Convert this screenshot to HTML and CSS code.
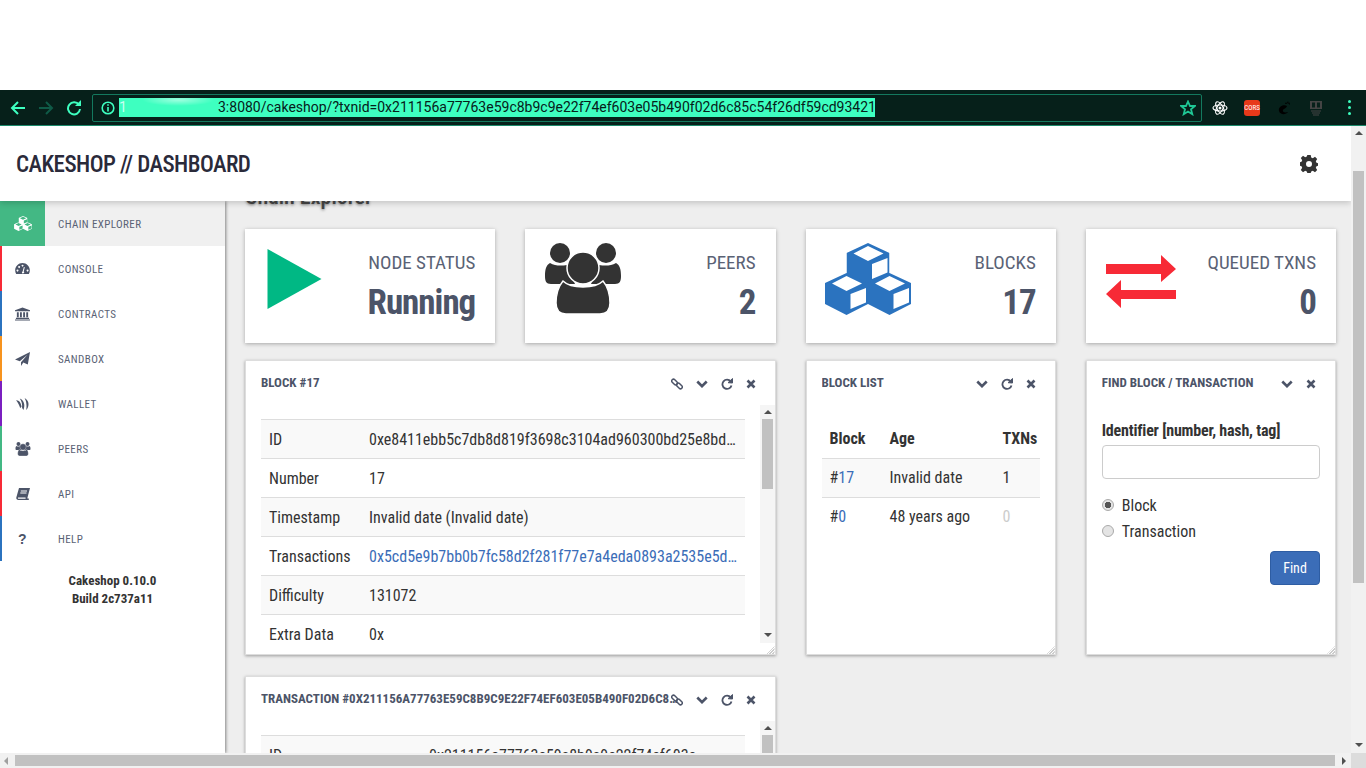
FILE: index.html
```html
<!DOCTYPE html>
<html lang="en">

<head>
    <meta charset="UTF-8">
    <title>Cakeshop Dashboard</title>
    <link rel="stylesheet" href="styles.css">
</head>

<body>
    <svg class="sprite" width="0" height="0">
        <symbol id="i-cube" viewBox="0 0 43 42">
            <path fill-rule="evenodd" d="M21.5 0L43 10V31L21.5 42L0 31V10ZM21.5 3L7 10.5L21.5 18L37 10.5ZM25.5 21V36L41 29.5V15Z" />
        </symbol>
        <symbol id="i-cubes" viewBox="0 0 86 72">
            <use href="#i-cube" x="21.5" y="0" width="43" height="42" />
            <use href="#i-cube" x="0" y="30" width="43" height="42" />
            <use href="#i-cube" x="43" y="30" width="43" height="42" />
        </symbol>
        <symbol id="i-users" viewBox="0 0 76 71">
            <circle cx="15" cy="10" r="10" />
            <circle cx="61" cy="10" r="10" />
            <path d="M5 20C10 23 16 23 22 22L30 41H6C1 41 0 38 0 33C0 27 1 22 5 20Z" />
            <path d="M71 20C66 23 60 23 54 22L46 41H70C75 41 76 38 76 33C76 27 75 22 71 20Z" />
            <path d="M18 38C26 46 50 46 58 38C63 44 65 52 65 60C65 67 61 71 55 71H21C15 71 11 67 11 60C11 52 13 44 18 38Z" stroke="#fff" stroke-width="1.5" />
            <circle cx="38" cy="25" r="16" stroke="#fff" stroke-width="1.5" />
        </symbol>
        <symbol id="i-gauge" viewBox="0 0 16 12">
            <path fill-rule="evenodd" d="M8 0C12.5 0 16 3.6 16 8C16 9.5 15.6 10.9 14.9 12H1.1C0.4 10.9 0 9.500 0 8C0 3.600 3.500 0 8 0ZM7.300 10.300A1.200 1.200 0 1 0 9.300 9.300L10.500 4.500L9.500 4.300L8.200 9ZM2.500 7.200A1 1 0 1 0 2.600 7.200ZM4.300 3.400A1 1 0 1 0 4.400 3.400ZM8 1.800A1 1 0 1 0 8.100 1.800ZM13.500 7.200A1 1 0 1 0 13.600 7.200Z" />
        </symbol>
        <symbol id="i-bank" viewBox="0 0 16 14">
            <path d="M8 0L16 3V4H0V3ZM2 5H4V10.500H2ZM5.300 5H7.300V10.500H5.300ZM8.700 5H10.700V10.500H8.700ZM12 5H14V10.500H12ZM1 11H15V12.300H1ZM0 12.800H16V14H0Z" />
        </symbol>
        <symbol id="i-plane" viewBox="0 0 15 14">
            <path d="M15 0L12.800 12.500L8.300 10.500L6 14V10.200L12.500 2.800L4.800 9.300L0 7.500Z" />
        </symbol>
        <symbol id="i-wallet" viewBox="0 0 14 13">
            <path d="M0 2.500C2.500 2.500 4 3.700 5 6L6 9.200C5.200 10 4.800 10.500 4.500 11C3.700 8 2 5 0 2.500Z" />
            <path d="M4 .5C6.500 1 8.200 3.500 8.800 6.500C9.200 8.500 8.800 11 8 13C7.200 12 6.800 11 6.500 10.300C7 7 6 3 4 .5Z" />
            <path d="M9.300 0C12 1.500 13.500 4 13.500 6.500C13.500 9 12.800 11.300 11 13C11.300 11 11.500 9 11.200 6.500C11 4 10.300 2 9.300 0Z" />
        </symbol>
        <symbol id="i-book" viewBox="0 0 14 12">
            <path fill-rule="evenodd" d="M3 0H14L11.500 9.500C11.300 10.200 11.300 10.500 12 10.500H12.800V12H2.500C1 12 0 11 0.300 9.500ZM4.800 2.500V3.500H11V2.500ZM4.300 4.500V5.500H10.500V4.500ZM2.500 9.500C2 9.500 1.800 10 2 10.400C2.100 10.700 2.400 10.800 2.800 10.800H9.700C9.500 10.300 9.500 10 9.600 9.500Z" />
        </symbol>
        <symbol id="i-link" viewBox="0 0 12 12">
            <g fill="none" stroke-width="1.500">
                <rect x="0.300" y="2.200" width="6.500" height="3.600" rx="1.800" transform="rotate(45 3.500 4)" />
                <rect x="5.200" y="6.200" width="6.500" height="3.600" rx="1.800" transform="rotate(45 8.500 8)" />
            </g>
        </symbol>
        <symbol id="i-chevron" viewBox="0 0 12 8">
            <path d="M1.300 1.500L6 6.200L10.700 1.500" fill="none" stroke-width="2.600" />
        </symbol>
        <symbol id="i-refresh" viewBox="0 0 12 12">
            <path d="M9.700 3.500A4.600 4.600 0 1 0 10.500 7.500" fill="none" stroke-width="1.800" />
            <path d="M7 4.700L11.500 5V0.500Z" />
        </symbol>
        <symbol id="i-times" viewBox="0 0 10 10">
            <path d="M1.500 1.500L8.500 8.500M8.500 1.500L1.500 8.500" fill="none" stroke-width="2.600" />
        </symbol>
    </svg>

    <div class="desktop-top"></div>

    <div class="browser-bar">
        <svg class="nav-icon" viewBox="0 0 16 16"><path d="M15 8H2M8 2L2 8L8 14" /></svg>
        <svg class="nav-icon nav-off" viewBox="0 0 16 16"><path d="M1 8H14M8 2L14 8L8 14" /></svg>
        <svg class="nav-icon" viewBox="0 0 16 16"><path d="M13 5A6 6 0 1 0 14 9" /><path class="solid" d="M9 6H15V0Z" /></svg>
        <div class="address">
            <svg class="info-icon" viewBox="0 0 14 14"><circle cx="7" cy="7" r="5.800" /><path d="M7 6V10.500M7 3.200V4.800" /></svg>
            <span class="selection"><span class="masked">1</span>3:8080/cakeshop/?txnid=0x211156a77763e59c8b9c9e22f74ef603e05b490f02d6c85c54f26df59cd93421</span>
            <svg class="star-icon" viewBox="0 0 16 16"><path d="M8 1.500L10 6H14.800L11 9.200L12.300 14.200L8 11.500L3.700 14.200L5 9.200L1.200 6H6Z" /></svg>
        </div>
        <div class="extensions">
            <svg class="ext" viewBox="0 0 16 16"><g fill="none" stroke="#fff" stroke-width="1.200"><ellipse cx="8" cy="8" rx="7" ry="3" /><ellipse cx="8" cy="8" rx="7" ry="3" transform="rotate(60 8 8)" /><ellipse cx="8" cy="8" rx="7" ry="3" transform="rotate(120 8 8)" /></g><circle cx="8" cy="8" r="1.500" fill="#fff" /></svg>
            <span class="ext cors">CORS</span>
            <svg class="ext" viewBox="0 0 16 16"><path d="M11 6C7 4 2 7 3 11C4 15 10 15 12 12C9 13 6 12 7 10C8 8 10 9 11 6ZM10 2L11 4L9 4ZM12 1L13 4L11 3ZM14 2L14 5L13 4Z" fill="#000" /></svg>
            <svg class="ext" viewBox="0 0 16 16"><rect x="2" y="1" width="12" height="8" fill="#444" /><rect x="4" y="2.500" width="3" height="5" fill="#06201a" /><rect x="9" y="2.500" width="3" height="5" fill="#06201a" /><path d="M3 11H13M4 13H12M5 15H11" stroke="#444" /></svg>
            <span class="menu-dots"><i></i><i></i><i></i></span>
        </div>
    </div>

    <div class="window">
        <div class="page-row">
            <div class="page">
                <header class="top-header">
                    <h1>CAKESHOP // DASHBOARD</h1>
                    <svg class="cog" viewBox="0 0 18 18"><path fill-rule="evenodd" d="M7.300 0H10.700L11.200 2.500L12.800 3.200L15 1.800L17.200 4L15.800 6.200L16.500 7.800L18 8.200V10.800L16.500 11.200L15.800 12.800L17.200 15L15 17.200L12.800 15.800L11.200 16.500L10.700 18H7.300L6.800 16.500L5.200 15.800L3 17.200L0.800 15L2.200 12.800L1.500 11.200L0 10.800V7.300L1.500 6.800L2.200 5.200L0.800 3L3 0.800L5.200 2.200L6.800 1.500ZM9 6A3 3 0 1 0 9 12A3 3 0 1 0 9 6Z" /></svg>
                </header>

                <div class="body-row">
                    <nav class="sidebar">
                        <a class="nav-item active"><span class="nav-glyph"><svg width="18" height="15"><use href="#i-cubes" /></svg></span><span class="nav-label">CHAIN EXPLORER</span></a>
                        <a class="nav-item c-red"><span class="nav-glyph"><svg width="15" height="11"><use href="#i-gauge" /></svg></span><span class="nav-label">CONSOLE</span></a>
                        <a class="nav-item c-blue"><span class="nav-glyph"><svg width="15" height="14"><use href="#i-bank" /></svg></span><span class="nav-label">CONTRACTS</span></a>
                        <a class="nav-item c-orange"><span class="nav-glyph"><svg width="15" height="14"><use href="#i-plane" /></svg></span><span class="nav-label">SANDBOX</span></a>
                        <a class="nav-item c-purple"><span class="nav-glyph"><svg width="13" height="12"><use href="#i-wallet" /></svg></span><span class="nav-label">WALLET</span></a>
                        <a class="nav-item c-green"><span class="nav-glyph"><svg width="16" height="14"><use href="#i-users" /></svg></span><span class="nav-label">PEERS</span></a>
                        <a class="nav-item c-red"><span class="nav-glyph"><svg width="14" height="12"><use href="#i-book" /></svg></span><span class="nav-label">API</span></a>
                        <a class="nav-item c-blue"><span class="nav-glyph question">?</span><span class="nav-label">HELP</span></a>
                        <div class="version">Cakeshop 0.10.0<br>Build 2c737a11</div>
                    </nav>

                    <main class="content">
                        <h2 class="page-title">Chain Explorer</h2>
                        <div class="grid">
                            <section class="stat">
                                <svg class="stat-play" viewBox="0 0 56 62"><path d="M1 1L55 31L1 61Z" /></svg>
                                <div class="stat-text"><div class="stat-label">NODE STATUS</div><div class="stat-value">Running</div></div>
                            </section>
                            <section class="stat">
                                <svg class="stat-users" viewBox="0 0 76 71"><use href="#i-users" /></svg>
                                <div class="stat-text"><div class="stat-label">PEERS</div><div class="stat-value">2</div></div>
                            </section>
                            <section class="stat">
                                <svg class="stat-cubes" viewBox="0 0 86 72"><use href="#i-cubes" /></svg>
                                <div class="stat-text"><div class="stat-label">BLOCKS</div><div class="stat-value">17</div></div>
                            </section>
                            <section class="stat">
                                <svg class="stat-exchange" viewBox="0 0 70 53"><path d="M0 9H55V0L70 14L55 27V19H0ZM70 35H15V25L0 39L15 53V44H70Z" /></svg>
                                <div class="stat-text"><div class="stat-label">QUEUED TXNS</div><div class="stat-value">0</div></div>
                            </section>

                            <section class="widget wide">
                                <div class="widget-head">
                                    <span class="widget-title">BLOCK #17</span>
                                    <span class="widget-tools">
                                        <svg width="12" height="12"><use href="#i-link" /></svg>
                                        <svg width="12" height="8"><use href="#i-chevron" /></svg>
                                        <svg width="12" height="12"><use href="#i-refresh" /></svg>
                                        <svg width="10" height="10"><use href="#i-times" /></svg>
                                    </span>
                                </div>
                                <div class="widget-scroll">
                                    <table class="detail-table">
                                        <tr><td>ID</td><td><div class="clip">0xe8411ebb5c7db8d819f3698c3104ad960300bd25e8bd4cc3a1e2f0b7c96d21aa</div></td></tr>
                                        <tr><td>Number</td><td>17</td></tr>
                                        <tr><td>Timestamp</td><td>Invalid date (Invalid date)</td></tr>
                                        <tr><td>Transactions</td><td><div class="clip link">0x5cd5e9b7bb0b7fc58d2f281f77e7a4eda0893a2535e5d8c1f2e04b7a6d3390ce</div></td></tr>
                                        <tr><td>Difficulty</td><td>131072</td></tr>
                                        <tr><td>Extra Data</td><td>0x</td></tr>
                                    </table>
                                    <div class="inner-bar"><b class="arrow-up"></b><i class="inner-thumb"></i><b class="arrow-down"></b></div>
                                </div>
                            </section>

                            <section class="widget">
                                <div class="widget-head">
                                    <span class="widget-title">BLOCK LIST</span>
                                    <span class="widget-tools">
                                        <svg width="12" height="8"><use href="#i-chevron" /></svg>
                                        <svg width="12" height="12"><use href="#i-refresh" /></svg>
                                        <svg width="10" height="10"><use href="#i-times" /></svg>
                                    </span>
                                </div>
                                <table class="list-table">
                                    <tr><th class="col-block">Block</th><th class="col-age">Age</th><th>TXNs</th></tr>
                                    <tr><td>#<a class="link">17</a></td><td>Invalid date</td><td>1</td></tr>
                                    <tr><td>#<a class="link">0</a></td><td>48 years ago</td><td class="muted">0</td></tr>
                                </table>
                            </section>

                            <section class="widget">
                                <div class="widget-head">
                                    <span class="widget-title">FIND BLOCK / TRANSACTION</span>
                                    <span class="widget-tools">
                                        <svg width="12" height="8"><use href="#i-chevron" /></svg>
                                        <svg width="10" height="10"><use href="#i-times" /></svg>
                                    </span>
                                </div>
                                <form class="find-form">
                                    <label class="find-label" for="identifier">Identifier [number, hash, tag]</label>
                                    <input class="find-input" type="text" id="identifier">
                                    <label class="radio"><input type="radio" name="kind" checked>Block</label>
                                    <label class="radio"><input type="radio" name="kind">Transaction</label>
                                    <button type="button" class="find-btn">Find</button>
                                </form>
                            </section>

                            <section class="widget wide">
                                <div class="widget-head">
                                    <span class="widget-title">TRANSACTION #0X211156A77763E59C8B9C9E22F74EF603E05B490F02D6C85C54F26DF59CD93421</span>
                                    <span class="widget-tools">
                                        <svg width="12" height="12"><use href="#i-link" /></svg>
                                        <svg width="12" height="8"><use href="#i-chevron" /></svg>
                                        <svg width="12" height="12"><use href="#i-refresh" /></svg>
                                        <svg width="10" height="10"><use href="#i-times" /></svg>
                                    </span>
                                </div>
                                <div class="widget-scroll">
                                    <table class="detail-table tx-table">
                                        <tr><td>ID</td><td><div class="clip">0x211156a77763e59c8b9c9e22f74ef603e05b490f02d6c85c54f26df59cd93421</div></td></tr>
                                    </table>
                                    <div class="inner-bar"><b class="arrow-up"></b><i class="inner-thumb"></i></div>
                                </div>
                            </section>
                        </div>
                    </main>
                </div>
            </div>

            <div class="page-vbar"><b class="arrow-up"></b><i class="page-vthumb"></i><b class="arrow-down"></b></div>
        </div>

        <div class="page-hbar">
            <b class="arrow-left"></b>
            <i class="page-hthumb"></i>
            <b class="arrow-right"></b>
            <span class="corner"></span>
        </div>
        <span class="dock-tab"></span>
    </div>
</body>

</html>
```

FILE: styles.css
```css
* {
    box-sizing: border-box;
}

html,
body {
    margin: 0;
    padding: 0;
    height: 768px;
    overflow: hidden;
    background-color: #fff;
    font-family: "Roboto Condensed", "Liberation Sans Narrow", Roboto, sans-serif;
    font-stretch: condensed;
    color: #333;
}

.sprite {
    position: absolute;
}

.desktop-top {
    height: 90px;
    background-color: #fff;
}

/* browser chrome */
.browser-bar {
    display: flex;
    align-items: center;
    height: 36px;
    padding-left: 10px;
    background-color: #06201a;
    border-bottom: 1px solid #1b8a6b;
}

.nav-icon {
    width: 16px;
    height: 16px;
    margin-right: 12px;
    fill: none;
    stroke: #3effc0;
    stroke-width: 2;
}

.nav-icon .solid {
    fill: #3effc0;
    stroke: none;
}

.nav-off {
    stroke: #0f5a47;
}

.address {
    display: flex;
    align-items: center;
    width: 1110px;
    height: 28px;
    margin-left: -2px;
    padding-left: 8px;
    border: 1px solid #13795e;
    border-radius: 2px;
}

.info-icon {
    width: 14px;
    height: 14px;
    fill: none;
    stroke: #3effc0;
    stroke-width: 1.6;
}

.selection {
    display: block;
    width: 756px;
    height: 19px;
    margin-left: 4px;
    background-color: #3effc0;
    color: #06201a;
    font-family: Roboto, sans-serif;
    font-stretch: normal;
    font-size: 14px;
    line-height: 19px;
    white-space: nowrap;
    overflow: hidden;
}

.masked {
    display: inline-block;
    width: 99px;
    color: #c9fff0;
    background: radial-gradient(ellipse 36px 6px at 60% 10%, rgba(255, 255, 255, 0.5), transparent);
}

.star-icon {
    width: 16px;
    height: 16px;
    margin-left: auto;
    margin-right: 5px;
    fill: none;
    stroke: #1fc795;
    stroke-width: 1.8;
}

.extensions {
    display: flex;
    align-items: center;
    margin-left: 10px;
}

.ext {
    width: 16px;
    height: 16px;
    margin-right: 16px;
}

.cors {
    display: block;
    background-color: #e8391a;
    border-radius: 3px;
    color: #fff;
    font-size: 7px;
    line-height: 16px;
    text-align: center;
}

.menu-dots {
    display: flex;
    flex-direction: column;
    gap: 3px;
    margin-left: 8px;
}

.menu-dots i {
    width: 3px;
    height: 3px;
    background-color: #3effc0;
    border-radius: 50%;
}

/* page */
.window {
    position: relative;
    height: 642px;
}

.page-row {
    display: flex;
    height: 627px;
}

.page {
    display: flex;
    flex-direction: column;
    width: 1351px;
    overflow: hidden;
}

.top-header {
    position: relative;
    z-index: 2;
    display: flex;
    flex: none;
    align-items: center;
    justify-content: space-between;
    height: 75px;
    padding: 0 33px 0 16px;
    background-color: #fff;
    box-shadow: 0 2px 6px rgba(0, 0, 0, 0.18);
}

.top-header h1 {
    margin: 2px 0 0;
    font-size: 23px;
    font-weight: 500;
    letter-spacing: -0.55px;
    color: #2a2a3a;
}

.cog {
    width: 18px;
    height: 18px;
    fill: #333;
}

.body-row {
    display: flex;
    flex: 1;
    min-height: 0;
}

.sidebar {
    position: relative;
    z-index: 1;
    flex: none;
    width: 225px;
    background-color: #fff;
    box-shadow: 1px 0 3px rgba(0, 0, 0, 0.45);
}

.nav-item {
    display: flex;
    align-items: center;
    height: 45px;
    border-left: 2px solid transparent;
    color: #5a6275;
    font-size: 11px;
    letter-spacing: 0.4px;
}

.nav-label {
    padding-top: 2px;
}

.nav-item svg {
    fill: #4c5468;
}

.nav-glyph {
    display: flex;
    align-items: center;
    justify-content: center;
    width: 41px;
    height: 100%;
    margin-right: 15px;
}

.question {
    font-family: "Liberation Sans", sans-serif;
    font-stretch: normal;
    font-size: 14px;
    font-weight: bold;
    color: #4c5468;
}

.nav-item.active {
    border-left: 0;
    background-color: #f0f0f0;
}

.active .nav-glyph {
    width: 45px;
    margin-right: 13px;
    background-color: #43b884;
}

.active svg {
    fill: #fff;
}

.c-red {
    border-left-color: #f72a36;
}

.c-blue {
    border-left-color: #2b73bf;
}

.c-orange {
    border-left-color: #f7931e;
}

.c-purple {
    border-left-color: #7b1fc0;
}

.c-green {
    border-left-color: #43b884;
}

.version {
    padding-top: 11px;
    font-size: 13px;
    font-weight: bold;
    line-height: 18px;
    text-align: center;
    color: #333;
}

.content {
    flex: 1;
    min-width: 0;
    padding: 0 15px 0 20px;
    background-color: #eee;
    overflow: hidden;
}

.page-title {
    height: 24px;
    margin: -16px 0 20px;
    font-size: 22px;
    font-weight: 500;
    line-height: 24px;
    color: #444;
    text-shadow: 0 1px 3px rgba(0, 0, 0, 0.5);
}

.grid {
    display: grid;
    grid-template-columns: repeat(4, 1fr);
    grid-auto-rows: min-content;
    gap: 17px 30px;
}

/* stat cards */
.stat {
    display: flex;
    align-items: flex-start;
    justify-content: space-between;
    height: 114px;
    padding: 0 20px;
    background-color: #fff;
    box-shadow: 0 1px 4px rgba(0, 0, 0, 0.3);
}

.stat-play {
    width: 57px;
    height: 62px;
    margin: 19px 0 0 1px;
    fill: #00b884;
}

.stat-users {
    width: 76px;
    height: 71px;
    margin-top: 14px;
    fill: #333;
}

.stat-cubes {
    width: 86px;
    height: 72px;
    margin: 14px 0 0 -1px;
    fill: #2b73bf;
}

.stat-exchange {
    width: 70px;
    height: 53px;
    margin-top: 26px;
    fill: #f72a36;
}

.stat-text {
    padding-top: 24px;
    text-align: right;
}

.stat-label {
    font-size: 19px;
    line-height: 20px;
    color: #5a6275;
}

.stat-value {
    margin-top: 9px;
    font-size: 35px;
    font-weight: bold;
    letter-spacing: -1px;
    line-height: 42px;
    color: #4c5468;
}

/* widgets */
.widget {
    position: relative;
    height: 295px;
    margin-bottom: 4px;
    padding: 0 15px;
    background-color: #fff;
    border: 1px solid #ddd;
    box-shadow: 0 1px 3px rgba(0, 0, 0, 0.35);
}

.widget::after {
    content: "";
    position: absolute;
    right: 0;
    bottom: 0;
    width: 8px;
    height: 8px;
    background: repeating-linear-gradient(135deg, transparent 0 1px, #ccc 1px 2px);
    clip-path: polygon(100% 0, 100% 100%, 0 100%);
}

.wide {
    grid-column: span 2;
}

.widget-head {
    position: relative;
    height: 44px;
    padding-top: 15px;
}

.widget-title {
    display: block;
    overflow: hidden;
    max-width: 420px;
    font-size: 13px;
    font-weight: bold;
    line-height: 14px;
    color: #4c5468;
    white-space: nowrap;
    text-overflow: ellipsis;
}

.widget-tools {
    position: absolute;
    top: 17px;
    right: 4px;
    display: flex;
    align-items: center;
    gap: 13px;
    height: 12px;
}

.widget-tools svg {
    fill: #4c5468;
    stroke: #4c5468;
}

.widget-scroll {
    display: flex;
    align-items: flex-start;
    justify-content: space-between;
    width: 514px;
}

.detail-table {
    width: 484px;
    margin-top: 14px;
    border-collapse: collapse;
    table-layout: fixed;
    font-size: 16px;
}

.detail-table td {
    height: 39px;
    padding: 0 8px;
    border-top: 1px solid #ddd;
    color: #333;
}

.detail-table td:first-child {
    width: 100px;
}

.detail-table tr:nth-child(odd) {
    background-color: #f9f9f9;
}

.tx-table td:first-child {
    width: 160px;
}

.tx-table .clip {
    padding-right: 25px;
}

.clip {
    overflow: hidden;
    white-space: nowrap;
    text-overflow: ellipsis;
}

.link {
    color: #3b6db8;
}

.inner-bar {
    display: flex;
    flex-direction: column;
    flex: none;
    align-items: center;
    width: 15px;
    height: 238px;
    background-color: #f5f5f5;
}

.inner-thumb {
    width: 11px;
    height: 70px;
    margin-top: 5px;
    background-color: #c1c1c1;
}

.inner-bar .arrow-up {
    margin-top: 5px;
}

.inner-bar .arrow-down {
    margin-top: auto;
    margin-bottom: 6px;
}

.list-table {
    width: 218px;
    margin-top: 14px;
    border-collapse: collapse;
    table-layout: fixed;
    font-size: 16px;
}

.list-table th {
    height: 39px;
    padding: 0 8px;
    font-weight: bold;
    text-align: left;
    border-bottom: 1px solid #ddd;
}

.col-block {
    width: 60px;
}

.col-age {
    width: 113px;
}

.list-table td {
    height: 39px;
    padding: 0 8px;
    border-bottom: 1px solid #ddd;
}

.list-table tr:nth-child(2) {
    background-color: #f9f9f9;
}

.list-table tr:last-child td {
    border-bottom: 0;
}

.muted {
    color: #ccc;
}

.find-form {
    display: flex;
    flex-direction: column;
    padding-top: 16px;
}

.find-label {
    margin-bottom: 4px;
    font-size: 16px;
    font-weight: bold;
    letter-spacing: -0.2px;
    line-height: 20px;
}

.find-input {
    width: 218px;
    height: 34px;
    margin-bottom: 13px;
    border: 1px solid #ccc;
    border-radius: 4px;
}

.radio {
    display: flex;
    align-items: center;
    height: 26px;
    font-size: 16px;
}

.radio input {
    appearance: none;
    width: 12px;
    height: 12px;
    margin: 0 8px 0 0;
    background-color: #e4e4e4;
    border: 1px solid #aaa;
    border-radius: 50%;
}

.radio input:checked {
    background: radial-gradient(circle, #555 0 3px, #e4e4e4 3.5px);
}

.find-btn {
    align-self: flex-end;
    width: 50px;
    height: 34px;
    margin-top: 7px;
    background-color: #3b6db8;
    border: 1px solid #2e5da3;
    border-radius: 4px;
    color: #fff;
    font: inherit;
    font-size: 14px;
}

/* page scrollbars */
.page-vbar {
    display: flex;
    flex: none;
    flex-direction: column;
    align-items: center;
    width: 15px;
    background-color: #f1f1f1;
}

.page-vthumb {
    width: 11px;
    height: 412px;
    margin-top: 36px;
    background-color: #c1c1c1;
}

.page-vbar .arrow-up {
    margin-top: 5px;
}

.page-vbar .arrow-down {
    margin-top: auto;
    margin-bottom: 6px;
}

.page-hbar {
    display: flex;
    align-items: center;
    height: 15px;
    background-color: #f1f1f1;
}

.page-hbar .arrow-left {
    margin-left: 4px;
}

.page-hthumb {
    width: 1320px;
    height: 11px;
    margin-left: 7px;
    background-color: #c1c1c1;
}

.page-hbar .arrow-right {
    margin-left: 7px;
}

.corner {
    width: 15px;
    height: 15px;
    margin-left: auto;
    background-color: #dcdcdc;
}

.arrow-up,
.arrow-down {
    width: 0;
    height: 0;
    border-left: 4px solid transparent;
    border-right: 4px solid transparent;
}

.arrow-up {
    border-bottom: 4px solid #505050;
}

.arrow-down {
    border-top: 4px solid #505050;
}

.arrow-left,
.arrow-right {
    width: 0;
    height: 0;
    border-top: 4px solid transparent;
    border-bottom: 4px solid transparent;
}

.arrow-left {
    border-right: 4px solid #a0a0a0;
}

.arrow-right {
    border-left: 4px solid #505050;
}

.dock-tab {
    position: absolute;
    left: 0;
    bottom: 15px;
    width: 3px;
    height: 20px;
    background-color: #666;
    border-radius: 0 3px 0 0;
}
```
